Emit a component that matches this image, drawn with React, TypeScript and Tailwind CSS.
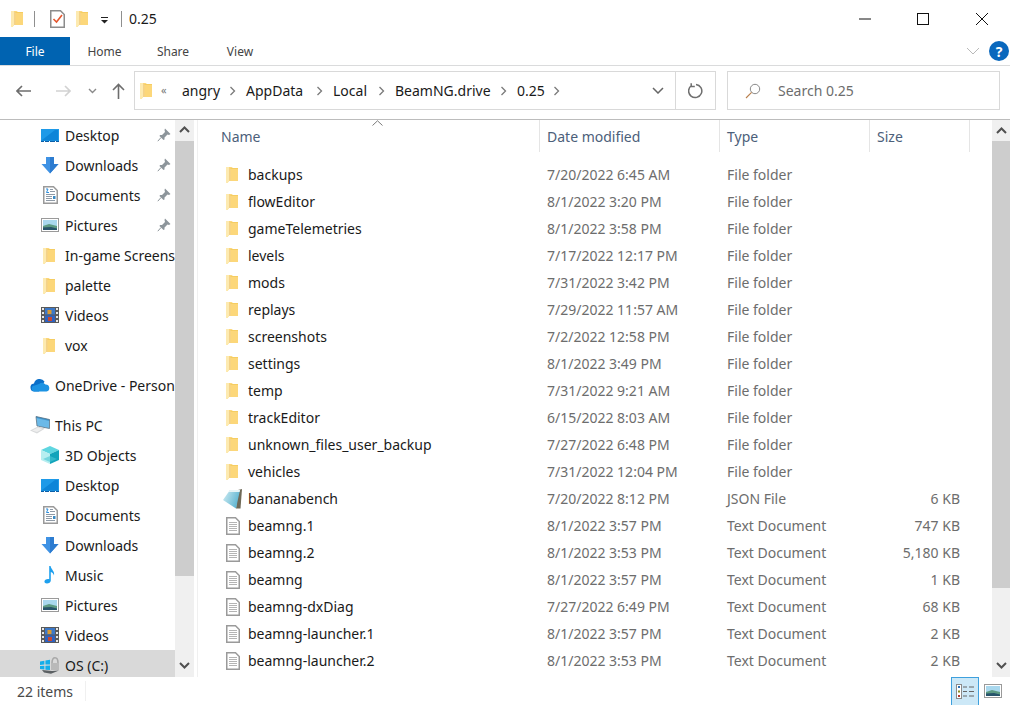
import type { ReactNode } from "react";

const Folder = () => (
  <svg width="12" height="17" viewBox="0 0 12 17" className="shrink-0">
    <path d="M0 1 H5.5 L7 2 H12 V15 H3 L1.5 17 H0 Z" fill="#fcd77a" />
    <path d="M0 1 H3 V15 L1.5 17 H0 Z" fill="#fdeab0" />
    <path d="M3 2 H4.5 V15 H3 Z" fill="#f3d28a" />
    <path d="M4.5 2 H12 V3 H4.5 Z" fill="#f5cd62" />
  </svg>
);

const TextDoc = () => (
  <svg width="14" height="18" viewBox="0 0 14 18" className="shrink-0">
    <path d="M.75 .75 H9.5 L13.25 4.5 V17.25 H.75 Z" fill="#fff" stroke="#9a9a9a" strokeWidth="1.5" />
    <path d="M3 5.5 H11 M3 7.5 H11 M3 9.5 H11 M3 11.5 H11 M3 13.5 H11" stroke="#b4b4b4" />
  </svg>
);

const JsonIcon = () => (
  <svg width="20" height="21" viewBox="0 0 20 21" className="shrink-0">
    <defs>
      <linearGradient id="json-paper" x1="0" y1="0" x2="1" y2="0.4">
        <stop offset="0" stopColor="#d2edf3" />
        <stop offset="1" stopColor="#5fb6d2" />
      </linearGradient>
    </defs>
    <path d="M15 2 L19 1 L17.5 20.5 L13 20.5 Z" fill="#6f6a58" />
    <path d="M7 2 L17 2 L13 20.5 L0 12 Z" fill="url(#json-paper)" />
    <path d="M7 2 L17 2 L16.6 4 L5.6 4 Z" fill="#e8f5f7" />
  </svg>
);

const DesktopIcon = () => (
  <svg width="18" height="13" viewBox="0 0 18 13">
    <rect x="0" y="0" width="18" height="13" fill="#1e9ae8" />
    <path d="M1 11 L14 1 H17 V11 Z" fill="#0d85d8" />
    <rect x="0" y="11.8" width="18" height="1.2" fill="#0a5fa8" />
    <path d="M3 12.5h1M8 12.5h1M14 12.5h1" stroke="#fff" />
  </svg>
);

const DownloadsIcon = () => (
  <svg width="18" height="17" viewBox="0 0 18 17">
    <path d="M5 0 H13 V7 H17.5 L9 16.5 L0.5 7 H5 Z" fill="#3f92e4" />
    <path d="M9 0 H13 V7 H17.5 L9 16.5 Z" fill="#2d7cd0" />
  </svg>
);

const DocumentsIcon = () => (
  <svg width="15" height="18" viewBox="0 0 15 18">
    <path d="M.75 .75 H10.5 L14.25 4.5 V17.25 H.75 Z" fill="#fff" stroke="#9a9a9a" strokeWidth="1.5" />
    <path d="M3 3 L5 3 L3.5 6.5 H6" stroke="#2e8fdc" fill="none" />
    <path d="M7 3.5 H10 M7 5.5 H12 M3 8.5 H12 M3 10.5 H9 M3 12.5 H9 M3 14.5 H12" stroke="#8f9aa6" />
    <rect x="10" y="10" width="2.5" height="3" fill="#3b8ac4" />
  </svg>
);

const PicturesIcon = () => (
  <svg width="18" height="14" viewBox="0 0 18 14">
    <rect x=".5" y=".5" width="17" height="13" fill="#fff" stroke="#9a9a9a" />
    <rect x="2" y="2" width="14" height="6" fill="#a9d8ee" />
    <path d="M2 8 L8 6 L16 8 V12 H2 Z" fill="#5d9a82" />
    <path d="M2 9.5 L10 9 L16 10.5 V12 H2 Z" fill="#27546b" />
  </svg>
);

const VideosIcon = () => (
  <svg width="18" height="16" viewBox="0 0 18 16">
    <rect width="18" height="16" fill="#5a5a5a" />
    <path d="M1 1h2v2H1zM1 5h2v2H1zM1 9h2v2H1zM1 13h2v2H1zM15 1h2v2h-2zM15 5h2v2h-2zM15 9h2v2h-2zM15 13h2v2h-2z" fill="#e8e8e8" />
    <rect x="4" y="1" width="10" height="6.5" fill="#3c78c8" />
    <rect x="4" y="8.5" width="10" height="6.5" fill="#2f62c0" />
    <rect x="6.5" y="3" width="4" height="4" fill="#d99a32" />
    <rect x="7" y="10" width="4" height="4" fill="#c8482e" />
  </svg>
);

const PinIcon = () => (
  <svg width="14" height="14" viewBox="0 0 14 14">
    <path d="M8 .5 L13.5 6 L12 7 L10.5 6.5 L7.5 9.5 L7.5 11.5 L6.5 12 L2.5 8 L3 7 L5 7 L8 4 L7.5 2 Z" fill="#8d959b" />
    <path d="M4 9.5 L.8 13.2" stroke="#8d959b" />
  </svg>
);

const OneDriveIcon = () => (
  <svg width="20" height="14" viewBox="0 0 20 14">
    <path d="M5 13.5 A4 4 0 0 1 4 5.5 A5.8 5.8 0 0 1 14.5 3.5 L9 13.5 Z" fill="#0a6fc9" />
    <path d="M5 13.5 A3 3 0 0 1 4.5 7.5 L9 6 A4.8 4.8 0 0 1 15.5 6.4 A3.6 3.6 0 0 1 16.5 13.5 Z" fill="#1c93e3" />
  </svg>
);

const ThisPcIcon = () => (
  <svg width="20" height="18" viewBox="0 0 20 18">
    <path d="M6 .5 L19.5 3.5 V12.5 L7 10 Z" fill="#6bb9e8" />
    <path d="M6 .5 L19.5 3.5 V5 L6.3 2 Z" fill="#3d93cc" />
    <path d="M6 .5 L19.5 3.5 V12.5 L7 10 Z" fill="none" stroke="#5d7484" strokeWidth=".8" />
    <path d="M0 14.5 L8 10.5 L15 12.5 L7 17.5 Z" fill="#d8dadb" />
    <path d="M2 14.5 L8 11.5 L12.5 13 L7 16 Z" fill="#eeeeee" />
  </svg>
);

const ObjectsIcon = () => (
  <svg width="18" height="18" viewBox="0 0 18 18">
    <path d="M9 0 L18 4 L9 8 L0 4 Z" fill="#5fd6e0" />
    <path d="M0 4 L9 8 V18 L0 14 Z" fill="#b6eef0" />
    <path d="M9 8 L18 4 V14 L9 18 Z" fill="#12a4bb" />
    <path d="M2 13 L9 10 L16 13 L9 16 Z" fill="#49c6d3" opacity=".6" />
  </svg>
);

const MusicIcon = () => (
  <svg width="12" height="18" viewBox="0 0 12 18">
    <path d="M5.2 0 H6.6 C7 3.5 11 5 10 9.5 C9.5 7.5 8.5 6.5 6.8 6 V14.5 C6.8 16.5 4.8 17.5 3 17.5 C1 17.5 .2 16.5 .5 15 C1 13.5 3.5 12.5 5.2 13.2 Z" fill="#1ea0ee" />
  </svg>
);

const DriveIcon = () => (
  <svg width="20" height="17" viewBox="0 0 20 17">
    <path d="M0 4.5 L4.4 3.8 V7.6 L0 8 Z M5.4 3.6 L10 2.8 V7.4 L5.4 7.6 Z M0 9 L4.4 8.8 V12.6 L0 12 Z M5.4 8.7 L10 8.6 V13 L5.4 12.7 Z" fill="#14aeea" />
    <path d="M12 6 C12 2 13.5 .8 15 .8 C16.8 .8 18 2.5 18 6 V9 H12 Z" fill="none" stroke="#a8a8a8" strokeWidth="1.6" />
    <rect x="11" y="6" width="8" height="7" fill="#b9b9b9" />
    <path d="M2 13 L12 14 L19 13.5 L11 16.8 L4 15.5 Z" fill="#5b6063" />
  </svg>
);

const Chevron = ({ up }: { up?: boolean }) => (
  <svg width="11" height="7" viewBox="0 0 11 7">
    <path d={up ? "M1 6 L5.5 1.5 L10 6" : "M1 1 L5.5 5.5 L10 1"} fill="none" stroke="#505050" strokeWidth="2" />
  </svg>
);

const Crumb = ({ label, className }: { label: string; className: string }) => (
  <div className={`flex items-center pr-[10px] ${className}`}>
    <span>{label}</span>
    <svg width="7" height="10" viewBox="0 0 7 10" className="ml-auto">
      <path d="M1.5 1 L5.5 5 L1.5 9" fill="none" stroke="#7a7a7a" strokeWidth="1.3" />
    </svg>
  </div>
);

const TitleSep = ({ className }: { className: string }) => (
  <div className={`w-px h-4 bg-[#8f8f8f] ${className}`} />
);

type NavRow = { label: string; icon: ReactNode; pin?: boolean; selected?: boolean; indent?: "top"; gap?: boolean };

const navFolder = (
  <div className="-ml-[2px]">
    <Folder />
  </div>
);

const navRows: NavRow[] = [
  { label: "Desktop", icon: <DesktopIcon />, pin: true },
  { label: "Downloads", icon: <DownloadsIcon />, pin: true },
  { label: "Documents", icon: <DocumentsIcon />, pin: true },
  { label: "Pictures", icon: <PicturesIcon />, pin: true },
  { label: "In-game Screenshots", icon: navFolder },
  { label: "palette", icon: navFolder },
  { label: "Videos", icon: <VideosIcon /> },
  { label: "vox", icon: navFolder },
  { label: "OneDrive - Personal", icon: <OneDriveIcon />, indent: "top", gap: true },
  { label: "This PC", icon: <ThisPcIcon />, indent: "top", gap: true },
  { label: "3D Objects", icon: <ObjectsIcon /> },
  { label: "Desktop", icon: <DesktopIcon /> },
  { label: "Documents", icon: <DocumentsIcon /> },
  { label: "Downloads", icon: <DownloadsIcon /> },
  { label: "Music", icon: <MusicIcon /> },
  { label: "Pictures", icon: <PicturesIcon /> },
  { label: "Videos", icon: <VideosIcon /> },
  { label: "OS (C:)", icon: <DriveIcon />, selected: true },
];

type FileRow = { name: string; date: string; type: string; size?: string; kind: "folder" | "json" | "text" };

const files: FileRow[] = [
  { name: "backups", date: "7/20/2022 6:45 AM", type: "File folder", kind: "folder" },
  { name: "flowEditor", date: "8/1/2022 3:20 PM", type: "File folder", kind: "folder" },
  { name: "gameTelemetries", date: "8/1/2022 3:58 PM", type: "File folder", kind: "folder" },
  { name: "levels", date: "7/17/2022 12:17 PM", type: "File folder", kind: "folder" },
  { name: "mods", date: "7/31/2022 3:42 PM", type: "File folder", kind: "folder" },
  { name: "replays", date: "7/29/2022 11:57 AM", type: "File folder", kind: "folder" },
  { name: "screenshots", date: "7/2/2022 12:58 PM", type: "File folder", kind: "folder" },
  { name: "settings", date: "8/1/2022 3:49 PM", type: "File folder", kind: "folder" },
  { name: "temp", date: "7/31/2022 9:21 AM", type: "File folder", kind: "folder" },
  { name: "trackEditor", date: "6/15/2022 8:03 AM", type: "File folder", kind: "folder" },
  { name: "unknown_files_user_backup", date: "7/27/2022 6:48 PM", type: "File folder", kind: "folder" },
  { name: "vehicles", date: "7/31/2022 12:04 PM", type: "File folder", kind: "folder" },
  { name: "bananabench", date: "7/20/2022 8:12 PM", type: "JSON File", size: "6 KB", kind: "json" },
  { name: "beamng.1", date: "8/1/2022 3:57 PM", type: "Text Document", size: "747 KB", kind: "text" },
  { name: "beamng.2", date: "8/1/2022 3:53 PM", type: "Text Document", size: "5,180 KB", kind: "text" },
  { name: "beamng", date: "8/1/2022 3:57 PM", type: "Text Document", size: "1 KB", kind: "text" },
  { name: "beamng-dxDiag", date: "7/27/2022 6:49 PM", type: "Text Document", size: "68 KB", kind: "text" },
  { name: "beamng-launcher.1", date: "8/1/2022 3:57 PM", type: "Text Document", size: "2 KB", kind: "text" },
  { name: "beamng-launcher.2", date: "8/1/2022 3:53 PM", type: "Text Document", size: "2 KB", kind: "text" },
];

const colsClass = "grid grid-cols-[342px_180px_150px_100px_1fr]";

export default function App() {
  return (
    <div className="w-[1010px] h-[705px] bg-white overflow-hidden flex flex-col text-[14px] text-[#1a1a1a] font-['Noto_Sans',sans-serif]">
      {/* title bar */}
      <div className="h-[37px] shrink-0 flex items-center">
        <div className="ml-[11px]"><Folder /></div>
        <TitleSep className="ml-[11px]" />
        <svg width="15" height="18" viewBox="0 0 15 18" className="ml-[15px]">
          <path d="M.75 .75 H10.5 L14.25 4.5 V17.25 H.75 Z" fill="#fff" stroke="#8c8c8c" strokeWidth="1.5" />
          <path d="M3.5 9 L6.5 12 L12 5" fill="none" stroke="#e4572e" strokeWidth="1.6" />
        </svg>
        <div className="ml-[11px]"><Folder /></div>
        <svg width="9" height="7" viewBox="0 0 9 7" className="ml-[12px] mt-[3px]">
          <path d="M1 0.5 H8" stroke="#222" />
          <path d="M1 3 H8 L4.5 6.5 Z" fill="#222" />
        </svg>
        <TitleSep className="ml-[12px]" />
        <span className="ml-[7px]">0.25</span>
        <div className="ml-auto flex items-center">
          <svg width="12" height="2" viewBox="0 0 12 2" className="mr-[46px]"><path d="M0 1 H12" stroke="#111" /></svg>
          <svg width="12" height="12" viewBox="0 0 12 12" className="mr-[47px]"><rect x=".5" y=".5" width="11" height="11" fill="none" stroke="#111" /></svg>
          <svg width="12" height="12" viewBox="0 0 12 12" className="mr-[22px]"><path d="M0 0 L12 12 M12 0 L0 12" stroke="#111" /></svg>
        </div>
      </div>

      {/* ribbon tabs */}
      <div className="h-[29px] shrink-0 flex items-stretch border-b border-[#dadbdc] text-[12px] text-[#444]">
        <div className="w-[70px] h-[28px] bg-[#0063b1] text-white flex items-center justify-center pt-px">File</div>
        <div className="w-[69px] flex items-center justify-center pt-px">Home</div>
        <div className="w-[68px] flex items-center justify-center pt-px">Share</div>
        <div className="w-[66px] flex items-center justify-center pt-px">View</div>
        <div className="ml-auto flex items-center pr-px">
          <svg width="14" height="8" viewBox="0 0 14 8" className="mr-[9px]">
            <path d="M1 1 L7 7 L13 1" fill="none" stroke="#b9b9b9" />
          </svg>
          <div className="w-5 h-5 rounded-full bg-[#0a68bd] text-white text-[14px] font-bold flex items-center justify-center">?</div>
        </div>
      </div>

      {/* address row */}
      <div className="h-[54px] shrink-0 flex items-center border-b border-[#bcbcbc] pb-[9px] pt-[5px]">
        <svg width="16" height="12" viewBox="0 0 16 12" className="ml-[16px]">
          <path d="M6 1 L1 6 L6 11 M1 6 H15" fill="none" stroke="#6d6d6d" strokeWidth="1.6" />
        </svg>
        <svg width="16" height="12" viewBox="0 0 16 12" className="ml-[23px]">
          <path d="M10 1 L15 6 L10 11 M15 6 H1" fill="none" stroke="#d2d2d2" strokeWidth="1.6" />
        </svg>
        <svg width="9" height="6" viewBox="0 0 9 6" className="ml-[17px]">
          <path d="M1 1 L4.5 4.5 L8 1" fill="none" stroke="#8a8a8a" strokeWidth="1.4" />
        </svg>
        <svg width="13" height="16" viewBox="0 0 13 16" className="ml-[15px]">
          <path d="M1 7 L6.5 1.5 L12 7 M6.5 1.5 V16" fill="none" stroke="#6d6d6d" strokeWidth="1.6" />
        </svg>
        <div className="ml-[9px] w-[582px] h-[39px] border border-[#d9d9d9] flex items-center text-[#1a1a1a]">
          <div className="ml-[5px] w-[14px]"><Folder /></div>
          <span className="ml-[7px] w-[21px] text-[11px] text-[#777]">«</span>
          <Crumb label="angry" className="w-[64px]" />
          <Crumb label="AppData" className="w-[87px]" />
          <Crumb label="Local" className="w-[62px]" />
          <Crumb label="BeamNG.drive" className="w-[122px]" />
          <Crumb label="0.25" className="w-[53px]" />
          <svg width="12" height="7" viewBox="0 0 12 7" className="ml-auto mr-[11px]">
            <path d="M1 1 L6 6 L11 1" fill="none" stroke="#666" strokeWidth="1.5" />
          </svg>
          <div className="w-[40px] h-full border-l border-[#d9d9d9] flex items-center justify-center">
            <svg width="16" height="16" viewBox="0 0 16 16">
              <path d="M3.5 2.5 A6.6 6.6 0 1 0 8 1.4 M3.2 .2 V3.6 H6.8" fill="none" stroke="#6f6f6f" strokeWidth="1.5" />
            </svg>
          </div>
        </div>
        <div className="ml-[11px] w-[273px] h-[39px] border border-[#d9d9d9] flex items-center text-[#6d6d6d]">
          <svg width="16" height="16" viewBox="0 0 16 16" className="ml-[17px]">
            <circle cx="10" cy="6" r="4.7" fill="none" stroke="#8a8a8a" />
            <path d="M6.6 9.4 L1 15" stroke="#b97f4c" strokeWidth="1.1" />
          </svg>
          <span className="ml-[17px]">Search 0.25</span>
        </div>
      </div>

      {/* body */}
      <div className="flex-1 min-h-0 flex">
        {/* navigation pane */}
        <div className="w-[198px] shrink-0 flex border-r border-[#f0f0f0] pr-[3px]">
          <div className="w-[175px] overflow-hidden">
            {navRows.map((row, i) => (
              <div
                key={i}
                className={`h-[30px] flex items-center relative whitespace-nowrap ${row.gap ? "mt-[10px]" : ""} ${row.selected ? "bg-[#d9d9d9]" : ""} ${row.indent ? "pl-[55px]" : "pl-[65px]"}`}
              >
                <div className={`absolute w-[22px] flex justify-center ${row.indent ? "left-[29px]" : "left-[39px]"}`}>{row.icon}</div>
                {row.label}
                {row.pin && <div className="absolute left-[157px]"><PinIcon /></div>}
              </div>
            ))}
          </div>
          <div className="w-[19px] flex flex-col bg-[#f0f0f0]">
            <div className="h-[19px] flex items-center justify-center"><Chevron up /></div>
            <div className="h-[435px] bg-[#cdcdcd] mt-[2px]" />
            <div className="flex-1 flex items-end justify-center pb-[8px]"><Chevron /></div>
          </div>
        </div>

        {/* file list */}
        <div className="flex-1 min-w-0 flex relative">
          <div className="flex-1 min-w-0">
            <div className={`${colsClass} h-[32px] text-[#4c607a]`}>
              <div className="pl-[23px] border-r border-[#e5e5e5] flex items-center">Name</div>
              <div className="pl-[7px] border-r border-[#e5e5e5] flex items-center">Date modified</div>
              <div className="pl-[7px] border-r border-[#e5e5e5] flex items-center">Type</div>
              <div className="pl-[7px] border-r border-[#e5e5e5] flex items-center">Size</div>
              <div />
            </div>
            <svg width="11" height="6" viewBox="0 0 11 6" className="absolute left-[174px] top-0">
              <path d="M.5 5.5 L5.5 .8 L10.5 5.5" fill="none" stroke="#7a7a7a" />
            </svg>
            <div className="pt-[9px]">
              {files.map((f) => (
                <div key={f.name} className={`${colsClass} h-[27px] items-center text-[#6d6d6d]`}>
                  <div className="flex items-center pl-[28px] text-[#1a1a1a] whitespace-nowrap">
                    <div className="w-[22px] h-[18px] shrink-0 flex items-center">
                      {f.kind === "folder" && <Folder />}
                      {f.kind === "text" && <TextDoc />}
                      {f.kind === "json" && <div className="-ml-[3px]"><JsonIcon /></div>}
                    </div>
                    {f.name}
                  </div>
                  <div className="pl-[7px]">{f.date}</div>
                  <div className="pl-[7px]">{f.type}</div>
                  <div className="text-right pr-[10px]">{f.size}</div>
                  <div />
                </div>
              ))}
            </div>
          </div>
          <div className="w-[18px] shrink-0 flex flex-col bg-[#f0f0f0]">
            <div className="h-[21px] flex items-center justify-center"><Chevron up /></div>
            <div className="h-[447px] bg-[#cdcdcd]" />
            <div className="flex-1 flex items-end justify-center pb-[8px]"><Chevron /></div>
          </div>
        </div>
      </div>

      {/* status bar */}
      <div className="h-[28px] shrink-0 flex items-center text-[14px] text-[#4a4a4a]">
        <span className="ml-[17px] w-[68px]">22 items</span>
        <div className="w-px h-[20px] bg-[#f0f0f0]" />
        <div className="ml-auto w-[28px] h-full bg-[#cce8f7] border-x border-t border-[#3ea0dd] flex items-center justify-center">
          <svg width="18" height="15" viewBox="0 0 18 15">
            <rect x=".5" y=".5" width="5" height="14" fill="#fff" stroke="#8a8a8a" />
            <rect x="2" y="2" width="2" height="2" fill="#2a6fb5" />
            <rect x="2" y="6.5" width="2" height="2" fill="#8c8c20" />
            <rect x="2" y="11" width="2" height="2" fill="#b53a2a" />
            <path d="M7 3 H11 M13 3 H18 M7 7.5 H11 M13 7.5 H18 M7 12 H11 M13 12 H18" stroke="#666" />
          </svg>
        </div>
        <div className="ml-[5px] mr-[8px]"><PicturesIcon /></div>
      </div>
    </div>
  );
}
